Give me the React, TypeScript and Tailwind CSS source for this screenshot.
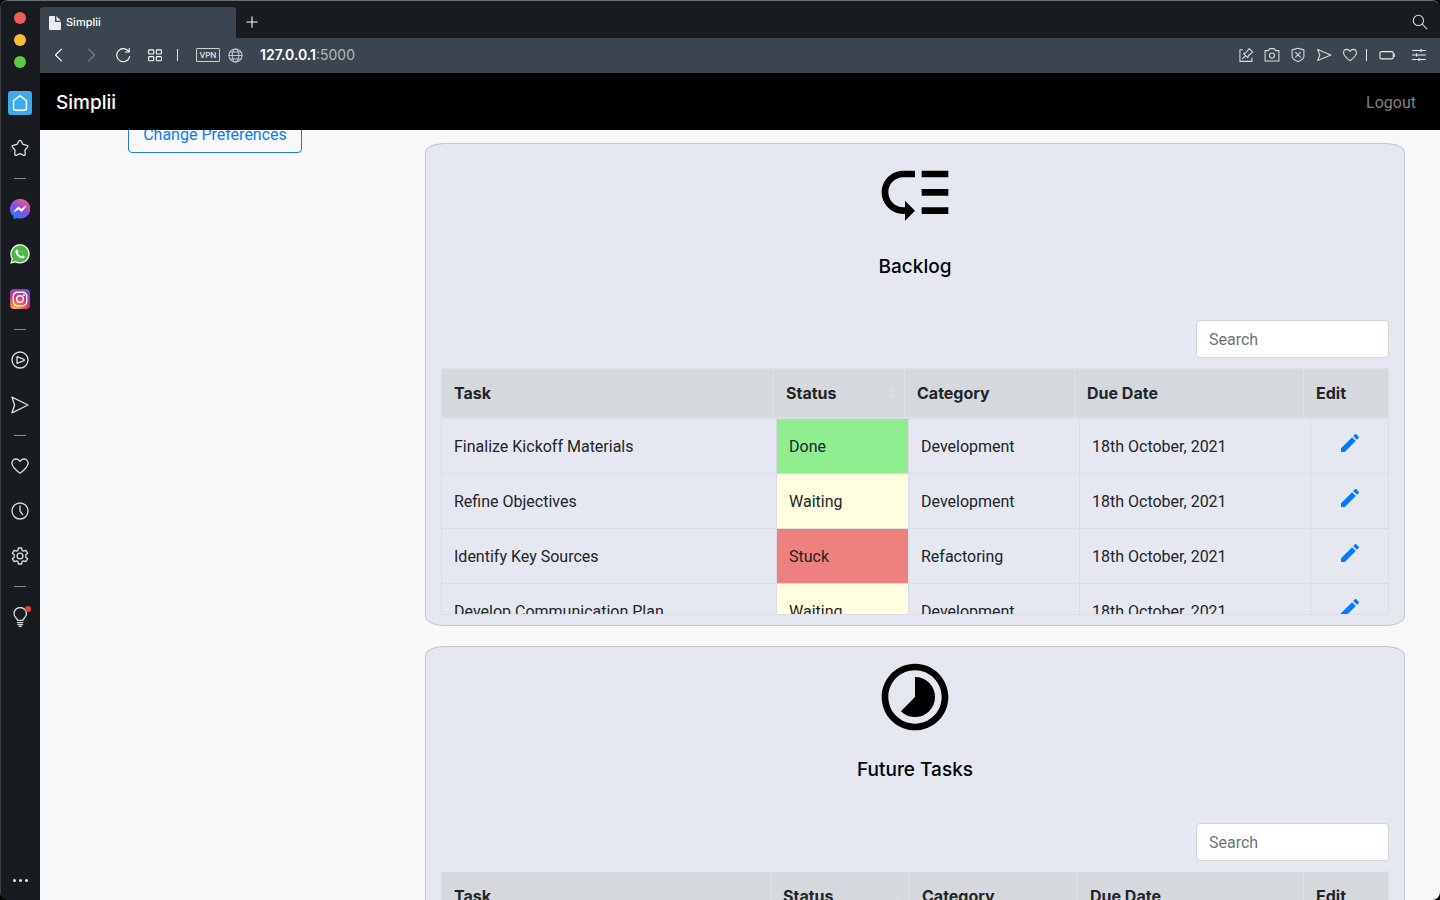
import React from 'react';
import { MdLowPriority, MdTimelapse, MdEdit } from 'react-icons/md';

type Status = 'Done' | 'Waiting' | 'Stuck';

interface Task {
  name: string;
  status: Status;
  category: string;
  due: string;
}

interface Columns {
  status: string;
  category: string;
  due: string;
  edit: string;
}

const statusColor: Record<Status, string> = {
  Done: 'bg-[#90ee90]',
  Waiting: 'bg-[#ffffdf]',
  Stuck: 'bg-[#ee8080]',
};

const tasks: Task[] = [
  { name: 'Finalize Kickoff Materials', status: 'Done', category: 'Development', due: '18th October, 2021' },
  { name: 'Refine Objectives', status: 'Waiting', category: 'Development', due: '18th October, 2021' },
  { name: 'Identify Key Sources', status: 'Stuck', category: 'Refactoring', due: '18th October, 2021' },
  { name: 'Develop Communication Plan', status: 'Waiting', category: 'Development', due: '18th October, 2021' },
];

const bodyColumns: Columns = { status: 'w-[132px]', category: 'w-[171px]', due: 'w-[231px]', edit: 'w-[78px]' };
const backlogHead: Columns = { status: 'w-[131px]', category: 'w-[170px]', due: 'w-[229px]', edit: 'w-[85px]' };
const futureHead: Columns = { status: 'w-[139px]', category: 'w-[168px]', due: 'w-[226px]', edit: 'w-[85px]' };

function Glyph({ size = 'size-5', children }: { size?: string; children: React.ReactNode }) {
  return (
    <svg
      viewBox="0 0 20 20"
      className={size}
      fill="none"
      stroke="currentColor"
      strokeWidth="1.35"
      strokeLinecap="round"
      strokeLinejoin="round"
      aria-hidden="true"
    >
      {children}
    </svg>
  );
}

const heartPath = 'M10 17.2C6.5 14.6 1.9 11.3 1.9 7.3C1.9 4.8 3.8 3 6 3C7.8 3 9.2 4 10 5.5C10.8 4 12.2 3 14 3C16.2 3 18.1 4.8 18.1 7.3C18.1 11.3 13.5 14.6 10 17.2Z';
const sendPath = 'M2 2.2L18 10L2 17.8L4.6 10Z';

function SideButton({ label, children }: { label: string; children: React.ReactNode }) {
  return (
    <button type="button" aria-label={label} className="flex h-[45px] w-full items-center justify-center text-[#d5dbde]">
      {children}
    </button>
  );
}

function SideRule() {
  return (
    <div className="flex h-4 items-center justify-center">
      <div className="h-px w-3 bg-[#858c92]" />
    </div>
  );
}

function Sidebar() {
  return (
    <aside className="flex w-10 shrink-0 flex-col items-center border-l border-[#3a3f43] bg-[#181b1f] pt-[11px] pr-px pb-2">
      <div className="mb-3 flex flex-col gap-[10px]">
        <button type="button" aria-label="Close" className="size-3 rounded-full bg-[#ed5f55]" />
        <button type="button" aria-label="Minimise" className="size-3 rounded-full bg-[#f4bd37]" />
        <button type="button" aria-label="Zoom" className="size-3 rounded-full bg-[#61c944]" />
      </div>
      <SideButton label="Start page">
        <span className="flex size-6 items-center justify-center rounded-[3px] bg-[#41aae8] text-white">
          <Glyph>
            <path d="M10 2.6L16.4 7.7V15.2Q16.4 17.2 14.4 17.2H5.6Q3.6 17.2 3.6 15.2V7.7Z" />
          </Glyph>
        </span>
      </SideButton>
      <SideButton label="Pinned">
        <Glyph>
          <path d="M8.9 3Q10 1.6 11.1 3L13 6.4L16.9 7.3Q18.4 7.9 17.5 9.1L14.9 12.2L15.3 16.2Q15.2 17.8 13.7 17.3L10 15.7L6.3 17.3Q4.8 17.8 4.7 16.2L5.1 12.2L2.5 9.1Q1.6 7.9 3.1 7.3L7 6.4Z" />
        </Glyph>
      </SideButton>
      <SideRule />
      <SideButton label="Messenger">
        <svg viewBox="0 0 20 20" className="size-5" aria-hidden="true">
          <defs>
            <linearGradient id="messenger" x1="0.2" y1="1" x2="0.8" y2="0">
              <stop offset="0" stopColor="#1c84ff" />
              <stop offset="0.5" stopColor="#8c4be8" />
              <stop offset="1" stopColor="#f5616f" />
            </linearGradient>
          </defs>
          <path d="M10 0A9.9 9.8 0 1 1 7 19L3.6 20L3.4 17.2A9.8 9.8 0 0 1 10 0Z" fill="url(#messenger)" />
          <path d="M4 12.7L8.2 7.9L11.4 10.2L16 7.1L11.9 12.4L8.4 10.2Z" fill="#fff" stroke="#fff" strokeWidth="0.8" strokeLinejoin="round" />
        </svg>
      </SideButton>
      <SideButton label="WhatsApp">
        <svg viewBox="0 0 20 20" className="size-5" aria-hidden="true">
          <path d="M0.3 19.8L1.6 14.8A9.7 9.7 0 1 1 5.3 18.4Z" fill="#f1f7f0" />
          <path d="M2 18.1L2.9 14.5A8.4 8.4 0 1 1 5.6 17.1Z" fill="#4fb64c" />
          <path d="M7.1 5.6C6.6 5.4 5.4 6 5.5 7.7C5.7 10.7 9.4 14.3 12.4 14.3C14 14.3 14.8 13.2 14.6 12.2L12.6 11.3L11.5 12.4C10 11.9 8.3 10.3 7.7 8.9L8.6 7.9Z" fill="#fff" />
        </svg>
      </SideButton>
      <SideButton label="Instagram">
        <svg viewBox="0 0 20 20" className="size-5" aria-hidden="true">
          <defs>
            <radialGradient id="insta" cx="0.25" cy="1.05" r="1.15">
              <stop offset="0" stopColor="#fdc468" />
              <stop offset="0.3" stopColor="#f2703f" />
              <stop offset="0.6" stopColor="#d6337f" />
              <stop offset="1" stopColor="#6a4fd0" />
            </radialGradient>
          </defs>
          <rect width="20" height="20" rx="4" fill="url(#insta)" />
          <rect x="3.3" y="3.3" width="13.4" height="13.4" rx="4" fill="none" stroke="#fff" strokeWidth="1.4" />
          <circle cx="10" cy="10" r="3.3" fill="none" stroke="#fff" strokeWidth="1.4" />
          <circle cx="14" cy="6" r="0.9" fill="#fff" />
        </svg>
      </SideButton>
      <SideRule />
      <SideButton label="Player">
        <Glyph>
          <circle cx="10" cy="10" r="8" />
          <path d="M7 6.7L14 9.3Q14.6 10 14 10.7L7 13.3Z" />
        </Glyph>
      </SideButton>
      <SideButton label="My Flow">
        <Glyph><path d={sendPath} /></Glyph>
      </SideButton>
      <SideRule />
      <SideButton label="Bookmarks">
        <Glyph><path d={heartPath} /></Glyph>
      </SideButton>
      <SideButton label="History">
        <Glyph>
          <circle cx="10" cy="10" r="8" />
          <path d="M10 5V10L12.6 13.6" />
        </Glyph>
      </SideButton>
      <SideButton label="Settings">
        <Glyph>
          <circle cx="10" cy="10" r="2.9" />
          <path d="M8.3 2H11.7L12 4.3L13.6 5.2L15.8 4.3L17.6 7.2L15.8 8.8V11.2L17.6 12.8L15.8 15.7L13.6 14.8L12 15.7L11.7 18H8.3L8 15.7L6.4 14.8L4.2 15.7L2.4 12.8L4.2 11.2V8.8L2.4 7.2L4.2 4.3L6.4 5.2L8 4.3Z" />
        </Glyph>
      </SideButton>
      <SideRule />
      <SideButton label="Tips">
        <span className="relative flex">
          <Glyph>
            <path d="M7.6 13.4C7.6 11.4 4 10.6 4 6.7A6.2 6.2 0 0 1 16.4 6.7C16.4 10.6 12.8 11.4 12.8 13.4Z" />
            <path d="M7.6 15.6H12.8M7.8 17.6H12.6M9.2 19.4H11.2" />
          </Glyph>
          <span className="absolute -top-px -right-px size-[6px] rounded-full bg-[#ef4136]" />
        </span>
      </SideButton>
      <button type="button" aria-label="Sidebar setup" className="mt-auto flex h-6 w-full items-center justify-center gap-[3px]">
        <span className="size-[3px] rounded-full bg-[#e3e6e8]" />
        <span className="size-[3px] rounded-full bg-[#e3e6e8]" />
        <span className="size-[3px] rounded-full bg-[#e3e6e8]" />
      </button>
    </aside>
  );
}

function TabBar() {
  return (
    <div className="flex h-[37px] items-end bg-[#181b1f]">
      <div className="flex h-[31px] w-[196px] items-center gap-[5px] rounded-t-[3px] bg-[#3b4550] pl-[9px] text-[11px] font-medium text-white">
        <svg viewBox="0 0 12 14" className="h-[14px] w-3" fill="#e9ecee" aria-hidden="true">
          <path d="M1 0H6V6H12V13Q12 14 11 14H1Q0 14 0 13V1Q0 0 1 0ZM7.4 0L12 4.7H7.4Z" />
        </svg>
        Simplii
      </div>
      <button type="button" aria-label="New tab" className="flex h-8 w-8 items-center justify-center text-white">
        <Glyph size="size-4"><path d="M10 3.5V16.5M3.5 10H16.5" /></Glyph>
      </button>
      <button type="button" aria-label="Search tabs" className="mr-3 ml-auto flex h-8 items-center text-[#d7dbde]">
        <Glyph size="size-4">
          <circle cx="8" cy="8" r="6.4" />
          <path d="M12.8 12.8L18.6 18.6" />
        </Glyph>
      </button>
    </div>
  );
}

function BarButton({ label, className = 'text-[#d5dbde]', children }: { label: string; className?: string; children: React.ReactNode }) {
  return (
    <button type="button" aria-label={label} className={className}>
      <Glyph size="size-4">{children}</Glyph>
    </button>
  );
}

function AddressBar() {
  return (
    <div className="flex h-[35px] items-center justify-between bg-[#3b4550] pr-[13px] pb-px pl-[11px]">
      <div className="flex items-center">
        <div className="flex items-center gap-4">
          <BarButton label="Back" className="text-white"><path d="M13 2.6L5.6 10L13 17.4" /></BarButton>
          <BarButton label="Forward" className="text-[#79818a]"><path d="M7 2.6L14.4 10L7 17.4" /></BarButton>
          <BarButton label="Reload" className="text-white">
            <path d="M17.2 5.6A8.2 8.2 0 1 0 18.4 12M17.8 1.6V6.3H13" />
          </BarButton>
          <BarButton label="Tab groups" className="text-white">
            <rect x="2" y="3.6" width="6.4" height="5.2" rx="1" />
            <rect x="11.6" y="3.6" width="6.4" height="5.2" rx="1" />
            <rect x="2" y="12" width="6.4" height="5.2" rx="1" />
            <rect x="11.6" y="12" width="6.4" height="5.2" rx="1" />
          </BarButton>
        </div>
        <div className="ml-[14px] h-3 w-px bg-[#dfe3e6]" />
        <button type="button" className="ml-[18px] flex h-[14px] w-6 items-center justify-center rounded-[1px] border border-[#cbd1d5] text-[8px] font-medium text-[#e3e7ea]">
          VPN
        </button>
        <span className="ml-2 flex text-[#c3c9ce]">
          <Glyph size="size-[15px]">
            <circle cx="10" cy="10" r="8.8" />
            <ellipse cx="10" cy="10" rx="4.4" ry="8.8" />
            <path d="M1.2 10H18.8M2.6 5.4H17.4M2.6 14.6H17.4" />
          </Glyph>
        </span>
        <div className="ml-[17px] text-sm text-[#b0b8bf]">
          <span className="font-semibold text-white">127.0.0.1</span>:5000
        </div>
      </div>
      <div className="flex items-center gap-2">
        <div className="flex items-center gap-[10px]">
          <BarButton label="Pinboards">
            <path d="M5.6 3.4H2.4V18H17.4V13.4M5.8 14.6L9.6 10.8M7 8.2L12.2 13.4L13.2 10.6L18.4 6.4L14 2L9.8 7.2Z" />
          </BarButton>
          <BarButton label="Snapshot">
            <path d="M1.4 4.5H5.8L7.2 2H12.8L14.2 4.5H18.6V17.4H1.4Z" />
            <circle cx="10" cy="10.6" r="3.2" />
          </BarButton>
          <BarButton label="Ad blocker">
            <path d="M10 1.6L17.4 3.6V11.4Q17.4 15.6 10 18.4Q2.6 15.6 2.6 11.4V3.6ZM7 6.8L13 12.8M13 6.8L7 12.8" />
          </BarButton>
          <BarButton label="Send to My Flow"><path d="M2 3L18.6 10L2 17L4.8 10Z" /></BarButton>
          <BarButton label="Bookmark"><path d={heartPath} /></BarButton>
        </div>
        <div className="h-3 w-px bg-[#e2e6e9]" />
        <div className="ml-1 flex items-center gap-4">
          <BarButton label="Battery saver" className="text-[#e9eff2]">
            <rect x="1.2" y="5.8" width="16.6" height="9" rx="1.6" />
            <path d="M19.2 8.8V11.8" />
          </BarButton>
          <BarButton label="Easy setup" className="text-[#e9eff2]">
            <path d="M2 4.4H18M2 10H18M2 15.6H18M12.6 3V5.8M7 8.6V11.4M10 14.2V17" />
          </BarButton>
        </div>
      </div>
    </div>
  );
}

function TableColumns({ cols }: { cols: Columns }) {
  return (
    <colgroup>
      <col />
      <col className={cols.status} />
      <col className={cols.category} />
      <col className={cols.due} />
      <col className={cols.edit} />
    </colgroup>
  );
}

function TaskCard({ title, icon, headCols }: { title: string; icon: React.ReactNode; headCols: Columns }) {
  return (
    <section className="rounded-[2%] border border-[#c4c8cf] bg-[#e5e8f0] px-[15px] py-[10px]">
      <div className="flex flex-col items-center text-black">
        {icon}
        <h2 className="mt-[21px] font-['Inter','Liberation_Sans',sans-serif] text-[19px] leading-6 font-medium">{title}</h2>
      </div>
      <div className="mt-[41px] flex justify-end">
        <input
          type="search"
          aria-label={'Search ' + title}
          placeholder="Search"
          className="h-[38px] w-[193px] rounded-[4px] border border-[#ced4da] bg-white px-3 text-[#495057] placeholder:text-[#6c757d]"
        />
      </div>
      <table className="mt-[10px] w-full table-fixed border-collapse text-left font-['Inter','Liberation_Sans',sans-serif]">
        <TableColumns cols={headCols} />
        <thead>
          <tr className="h-[49px] bg-[#d5d8dc]">
            {['Task', 'Status', 'Category', 'Due Date', 'Edit'].map((label) => (
              <th key={label} scope="col" className="border border-[#dee2e6] px-3 font-bold">
                {label === 'Status' ? (
                  <span className="flex items-center justify-between">
                    {label}
                    <svg viewBox="0 0 8 14" className="-mr-1 h-[14px] w-2" fill="#dadbdc" aria-hidden="true">
                      <path d="M4 0L8 6H0ZM4 14L0 8H8Z" />
                    </svg>
                  </span>
                ) : (
                  label
                )}
              </th>
            ))}
          </tr>
        </thead>
      </table>
      <div className="h-[197px] overflow-hidden border-b border-[#dadee4]">
        <table aria-label={title + ' tasks'} className="w-full table-fixed border-collapse">
          <TableColumns cols={bodyColumns} />
          <tbody>
            {tasks.map((task) => (
              <tr key={task.name} className="h-[55px]">
                <td className="border border-[#dadee4] px-3 pt-[2px]">{task.name}</td>
                <td className={'border border-[#dadee4] px-3 pt-[2px] ' + statusColor[task.status]}>{task.status}</td>
                <td className="border border-[#dadee4] px-3 pt-[2px]">{task.category}</td>
                <td className="border border-[#dadee4] px-3 pt-[2px]">{task.due}</td>
                <td className="border border-[#dadee4] px-3 pb-[6px] text-center">
                  <button type="button" aria-label={'Edit ' + task.name} className="align-middle text-[#007bff]">
                    <MdEdit className="size-6" />
                  </button>
                </td>
              </tr>
            ))}
          </tbody>
        </table>
      </div>
    </section>
  );
}

export default function App() {
  return (
    <div className="h-screen bg-black font-['Inter','Liberation_Sans',sans-serif] text-base text-[#212529]">
      <div className="flex h-full overflow-hidden rounded-lg border-t border-[#6a7074] bg-[#181b1f]">
        <Sidebar />
        <div className="flex min-w-0 flex-1 flex-col">
          <TabBar />
          <AddressBar />
          <nav className="flex h-[57px] shrink-0 items-center justify-between bg-black px-4 pt-[2px]">
            <a href="#home" className="text-[19px] leading-6 font-medium text-white">Simplii</a>
            <a href="#logout" className="px-2 font-['Roboto',sans-serif] text-[#808080]">Logout</a>
          </nav>
          <main className="grid min-h-0 flex-1 grid-cols-[1fr_3fr] overflow-hidden bg-[#f8f8f8] font-['Roboto',sans-serif]">
            <div className="flex items-start justify-center">
              <button type="button" className="-mt-[15px] h-[38px] rounded-[4px] border border-[#1c7ee0] px-[14px] pt-[2px] text-[#0f7bf0]">
                Change Preferences
              </button>
            </div>
            <div className="flex min-w-0 flex-col gap-5 px-[35px] pt-[13px]">
              <TaskCard title="Backlog" icon={<MdLowPriority className="size-20" />} headCols={backlogHead} />
              <TaskCard title="Future Tasks" icon={<MdTimelapse className="size-20" />} headCols={futureHead} />
            </div>
          </main>
        </div>
      </div>
    </div>
  );
}
